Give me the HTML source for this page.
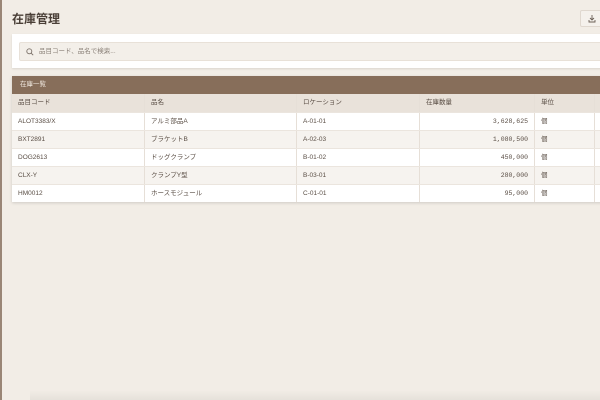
<!DOCTYPE html>
<html><head><meta charset="utf-8"><style>
*{box-sizing:border-box;margin:0;padding:0}
body{width:600px;height:400px;overflow:hidden;background:#f2ede6;font-family:"Liberation Sans","Noto Sans CJK JP",sans-serif;color:#5a4e45;position:relative}
.edge{position:absolute;left:0;top:0;width:2px;height:400px;background:#9a8676}
h1{position:absolute;left:12px;top:10px;font-size:12px;font-weight:bold;color:#4a3f37}
.dl{position:absolute;left:580px;top:10px;width:24px;height:17px;border:1px solid #e0d8cf;border-radius:2px;background:#f5f1ec}
.card{position:absolute;left:12px;top:34px;width:600px;height:34px;background:#fff;box-shadow:0 1px 2px rgba(0,0,0,.1)}
.inp{position:absolute;left:7px;top:8px;width:600px;height:19px;background:#f3efe9;border:1px solid #e8e1d8;border-radius:2px;font-size:6.5px;color:#8a8078;line-height:17px;padding-left:19px}
.inp svg{position:absolute;left:6px;top:5px}
.tbl{position:absolute;left:12px;top:76px;width:600px;background:#fff;box-shadow:0 1px 3px rgba(0,0,0,.15)}
.bar{height:18px;background:#876e5a;color:#f0e8df;font-size:6.5px;line-height:18px;padding-left:8px}
.row{display:flex;height:18px;border-top:1px solid #ebe5de;font-size:6.5px;line-height:17px}
.row div{padding-left:6px;border-right:1px solid #e6dfd7;white-space:nowrap}
.hd{background:#e9e2da;border-top:none}
.alt{background:#f6f3ef}
.c1{width:133px}.c2{width:152px}.c3{width:123px}.c4{width:115px;text-align:right;padding-right:6px;font-family:"Liberation Mono",monospace}.c5{width:60px}.c6{width:17px}
.hd .c4{font-family:"Liberation Sans","Noto Sans CJK JP",sans-serif;text-align:left}
.shadow{position:absolute;left:30px;right:0;top:390px;height:10px;background:linear-gradient(to bottom,rgba(0,0,0,0),rgba(0,0,0,.05))}
</style></head><body>
<div class="edge"></div>
<h1>在庫管理</h1>
<div class="dl"><svg width="22" height="15" viewBox="0 0 22 15"><path d="M11 4v5M9 7l2 2 2-2M8 9v2h6V9" stroke="#6a5e55" stroke-width=".9" fill="none"/></svg></div>
<div class="card"><div class="inp"><svg width="8" height="8" viewBox="0 0 8 8"><circle cx="3.3" cy="3.3" r="2.5" stroke="#7a7068" fill="none" stroke-width=".9"/><path d="M5.2 5.2l2 2" stroke="#7a7068" stroke-width=".9"/></svg>品目コード、品名で検索...</div></div>
<div class="tbl">
<div class="bar">在庫一覧</div>
<div class="row hd"><div class="c1">品目コード</div><div class="c2">品名</div><div class="c3">ロケーション</div><div class="c4">在庫数量</div><div class="c5">単位</div><div class="c6"></div></div>
<div class="row"><div class="c1">ALOT3383/X</div><div class="c2">アルミ部品A</div><div class="c3">A-01-01</div><div class="c4">3,628,625</div><div class="c5">個</div><div class="c6"></div></div>
<div class="row alt"><div class="c1">BXT2891</div><div class="c2">ブラケットB</div><div class="c3">A-02-03</div><div class="c4">1,080,500</div><div class="c5">個</div><div class="c6"></div></div>
<div class="row"><div class="c1">DOG2613</div><div class="c2">ドッグクランプ</div><div class="c3">B-01-02</div><div class="c4">450,000</div><div class="c5">個</div><div class="c6"></div></div>
<div class="row alt"><div class="c1">CLX-Y</div><div class="c2">クランプY型</div><div class="c3">B-03-01</div><div class="c4">280,000</div><div class="c5">個</div><div class="c6"></div></div>
<div class="row"><div class="c1">HM0012</div><div class="c2">ホースモジュール</div><div class="c3">C-01-01</div><div class="c4">95,000</div><div class="c5">個</div><div class="c6"></div></div>
</div>
<div class="shadow"></div>
</body></html>
